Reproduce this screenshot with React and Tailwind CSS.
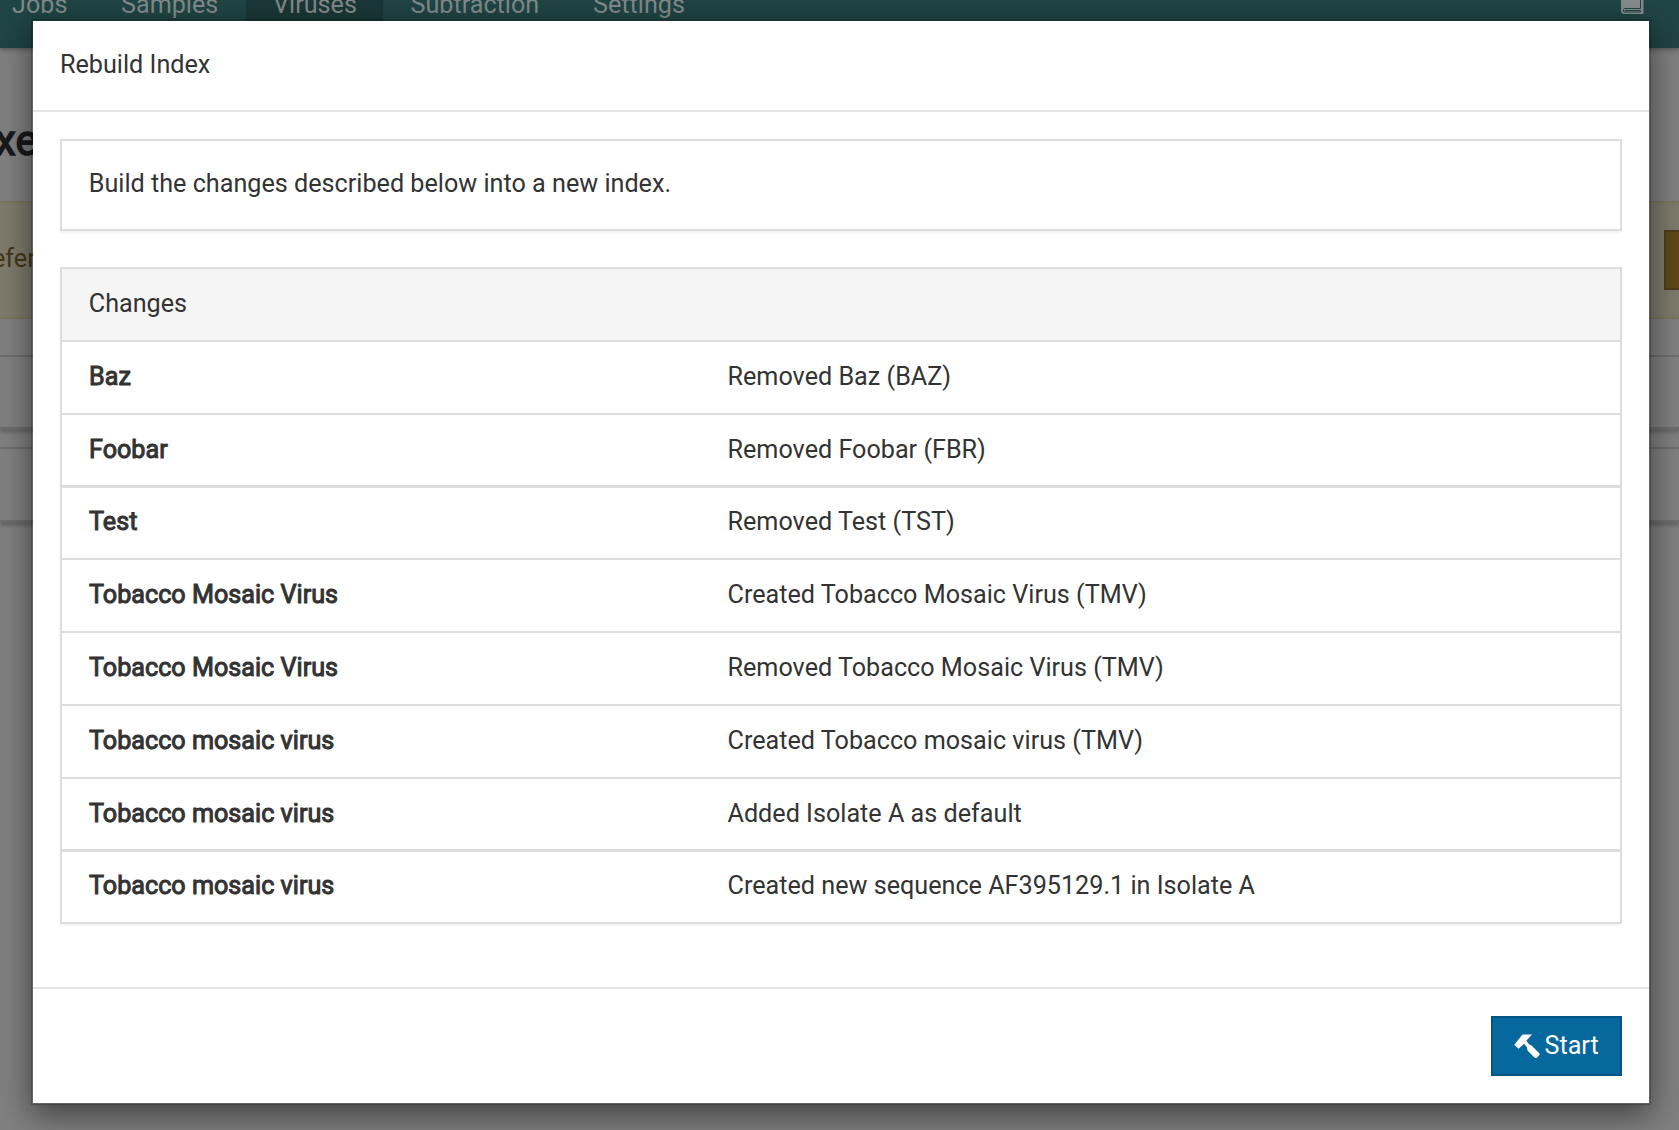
const rows = [
  ["Baz", "Removed Baz (BAZ)", "h-[73px] border-b-2 pt-[17px]"],
  ["Foobar", "Removed Foobar (FBR)", "h-[73px] border-b-3 pt-[17px]"],
  ["Test", "Removed Test (TST)", "h-[72px] border-b-2 pt-4"],
  ["Tobacco Mosaic Virus", "Created Tobacco Mosaic Virus (TMV)", "h-[73px] border-b-2 pt-[17px]"],
  ["Tobacco Mosaic Virus", "Removed Tobacco Mosaic Virus (TMV)", "h-[73px] border-b-2 pt-[17px]"],
  ["Tobacco mosaic virus", "Created Tobacco mosaic virus (TMV)", "h-[73px] border-b-2 pt-[17px]"],
  ["Tobacco mosaic virus", "Added Isolate A as default", "h-[73px] border-b-3 pt-[17px]"],
  ["Tobacco mosaic virus", "Created new sequence AF395129.1 in Isolate A", "h-[70px] pt-4"],
];

const tabs = [
  ["Jobs", "w-[94px] pl-3"],
  ["Samples", "w-[152px] pl-[27px]"],
  ["Viruses", "w-[137px] pl-[27px] bg-[#1b3737]"],
  ["Subtraction", "w-[183px] pl-[27.500px]"],
  ["Settings", "w-[160px] pl-[27px]"],
];

function Backdrop() {
  return (
    <div className="h-[1130px] w-[1679px] overflow-hidden bg-[#808080]">
      <div className="flex h-12 bg-[#1f4544] text-[#808a89] shadow-[0_2px_4px_rgba(0,0,0,0.3)]">
        {tabs.map(([name, cls]) => (
          <div key={name} className={`${cls} h-12 shrink-0`}>
            <div className="-mt-[10px] leading-[30px]">{name}</div>
          </div>
        ))}
        <svg className="mr-[35px] ml-auto h-[14px] w-6" viewBox="0 0 24 14">
          <path d="M1 0H23.500V14H4Q1 14 1 10Z" fill="#858a8a" />
          <path d="M20.500 0V8.500H4.500Q2.500 9.500 4 12H20.500V10.500H5" fill="none" stroke="#1f4544" strokeWidth="1" />
        </svg>
      </div>
      <div className="-ml-[5px] mt-[70px] h-[46px] text-[42px] leading-[46px] text-[#191919] [-webkit-text-stroke:1.500px_#191919]">
        xes
      </div>
      <div className="mt-[37px] flex h-[118px] items-center border-y-2 border-[#7d735e] bg-[#7e7b6c]">
        <div className="-mt-[2px] -ml-[8px] text-[#453519]">efere</div>
        <div className="ml-auto h-[60px] w-[15px] border-2 border-r-0 border-[#503c15] bg-[#5e471a]" />
      </div>
      <div className="mt-9 h-[74px] border-y-2 border-[#6e6e6e] shadow-[0_4px_3px_rgba(0,0,0,0.18)]" />
      <div className="mt-[18px] h-[75px] border-y-2 border-[#6e6e6e] shadow-[0_4px_3px_rgba(0,0,0,0.18)]" />
    </div>
  );
}

export default function App() {
  return (
    <div className="relative h-[1130px] w-[1679px] overflow-hidden font-[Roboto,sans-serif] text-[25.180px] text-[#333]">
      <Backdrop />
      <div className="absolute top-[19px] left-[31px] flex h-[1086px] w-[1620px] flex-col border-2 border-black/20 bg-white bg-clip-padding shadow-[0_10px_30px_rgba(0,0,0,0.5)]">
        <div className="h-[91px] border-b-2 border-[#e5e5e5] pt-[26px] pl-[27px] leading-[36px]">Rebuild Index</div>
        <div className="h-[875px] px-[27px] pt-[27px]">
          <div className="h-[92px] border-2 border-[#ddd] pt-[25px] pl-[26.750px] leading-[36px] shadow-[0_2px_2px_rgba(0,0,0,0.05)]">
            Build the changes described below into a new index.
          </div>
          <div className="mt-9 border-2 border-[#ddd] shadow-[0_2px_2px_rgba(0,0,0,0.05)]">
            <div className="h-[73px] border-b-2 border-[#ddd] bg-[#f5f5f5] pt-[17px] pl-[26.750px] leading-[36px]">Changes</div>
            {rows.map(([name, change, cls], i) => (
              <div key={i} className={`${cls} flex border-[#ddd] pl-[27px] leading-[36px]`}>
                <div className="w-[638.500px] [-webkit-text-stroke:1px_#333]">{name}</div>
                <div>{change}</div>
              </div>
            ))}
          </div>
        </div>
        <div className="flex flex-1 justify-end border-t-2 border-[#e5e5e5] pt-[27px] pr-[27px]">
          <button className="flex h-[60px] w-[131px] items-center border-2 border-[#035586] bg-[#07689d] pl-[21px] text-white">
            <svg className="h-6 w-[26px] shrink-0" viewBox="0 0 26 24" fill="currentColor">
              <path d="M8.500 0.500H18L12.500 6.500L14 9L15.500 10.500L17.500 11.500L25.500 19.500V21L22.500 24H21L13.500 16.500L13 13.500L11.500 11.500L10 9.800L8.500 11.300L4.500 14.800L0.300 10.800Z" />
            </svg>
            <span className="ml-[4.500px]">Start</span>
          </button>
        </div>
      </div>
    </div>
  );
}
